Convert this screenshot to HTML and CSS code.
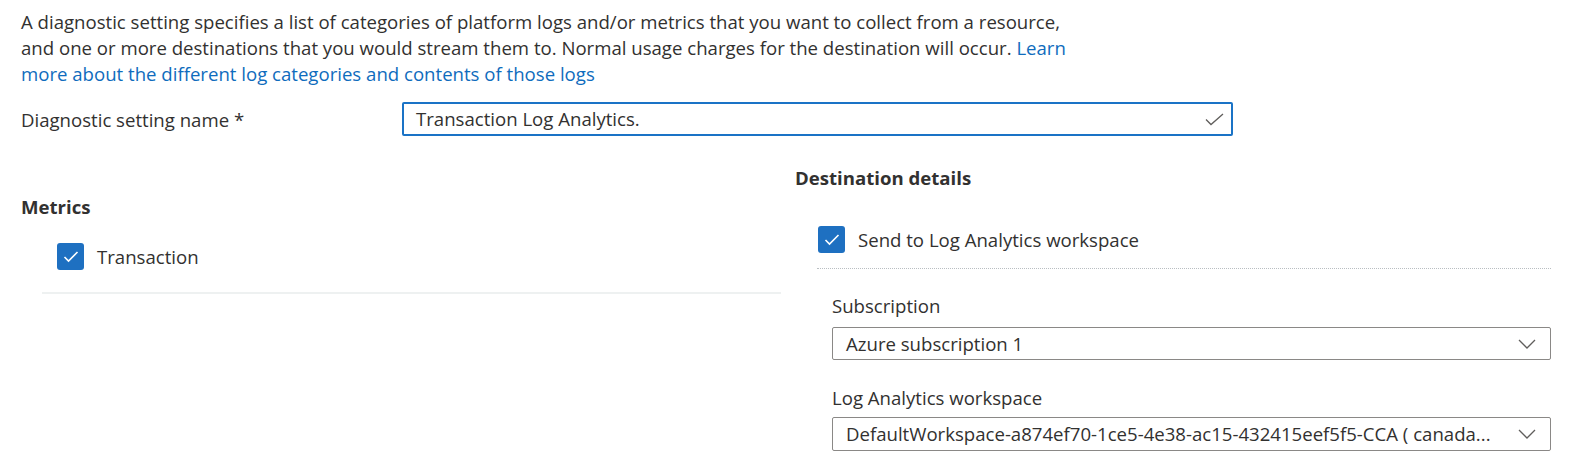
FILE: index.html
```html
<!DOCTYPE html>
<html lang="en">
<head>
<meta charset="utf-8">
<title>Diagnostic setting</title>
<link rel="stylesheet" href="styles.css">
</head>
<body>
<div class="page">
  <p class="intro">A diagnostic setting specifies a list of categories of platform logs and/or metrics that you want to collect from a resource,<br>and one or more destinations that you would stream them to. Normal usage charges for the destination will occur. <a class="link" href="#">Learn<br>more about the different log categories and contents of those logs</a></p>

  <div class="name-row">
    <label class="name-label">Diagnostic setting name *</label>
    <div class="name-input">
      <span class="name-value">Transaction Log Analytics.</span>
      <svg class="valid-icon" width="19" height="13" viewBox="0 0 19 13"><polyline points="1,6.5 6,11.5 18,1" fill="none" stroke="#605e5c" stroke-width="1.3"/></svg>
    </div>
  </div>

  <div class="columns">
    <section class="col-left">
      <h3 class="heading">Metrics</h3>
      <div class="metric-list">
        <div class="check-row">
          <span class="checkbox"><svg width="27" height="27" viewBox="0 0 27 27"><polyline points="7.5,14 11.5,18 20.5,9" fill="none" stroke="#fff" stroke-width="1.6"/></svg></span>
          <span class="check-text">Transaction</span>
        </div>
      </div>
    </section>

    <section class="col-right">
      <h3 class="heading">Destination details</h3>
      <div class="check-row dest-check">
        <span class="checkbox"><svg width="27" height="27" viewBox="0 0 27 27"><polyline points="7.5,14 11.5,18 20.5,9" fill="none" stroke="#fff" stroke-width="1.6"/></svg></span>
        <span class="check-text">Send to Log Analytics workspace</span>
      </div>
      <div class="dest-divider"></div>
      <div class="dest-fields">
        <label class="field-label">Subscription</label>
        <div class="select">
          <span class="select-value">Azure subscription 1</span>
          <svg class="chevron" width="18" height="10" viewBox="0 0 18 10"><polyline points="1,1 9,9 17,1" fill="none" stroke="#605e5c" stroke-width="1.3"/></svg>
        </div>
        <label class="field-label second">Log Analytics workspace</label>
        <div class="select tall">
          <span class="select-value">DefaultWorkspace-a874ef70-1ce5-4e38-ac15-432415eef5f5-CCA ( canada...</span>
          <svg class="chevron" width="18" height="10" viewBox="0 0 18 10"><polyline points="1,1 9,9 17,1" fill="none" stroke="#605e5c" stroke-width="1.3"/></svg>
        </div>
      </div>
    </section>
  </div>
</div>
</body>
</html>
```

FILE: styles.css
```css
html, body {
  margin: 0;
  padding: 0;
  background: #ffffff;
}

.page {
  font-family: "Open Sans", "Noto Sans", Arial, sans-serif;
  font-size: 18.6px;
  line-height: 26px;
  color: #323130;
  padding: 9px 0 0 21px;
  width: 1531px;
}

.intro {
  margin: 0;
  white-space: nowrap;
}

.link {
  color: #0f6cbd;
  text-decoration: none;
}

.name-row {
  display: flex;
  align-items: center;
  margin-top: 15px;
  height: 34px;
}

.name-label {
  width: 381px;
  flex: none;
  padding-top: 2px;
}

.name-input {
  box-sizing: border-box;
  width: 831px;
  height: 34px;
  border: 2px solid #1a73c6;
  border-radius: 2px;
  display: flex;
  align-items: center;
  justify-content: space-between;
  padding: 0 7px 0 12px;
}

.valid-icon {
  display: block;
}

.columns {
  display: flex;
  margin-top: 29px;
}

.col-left {
  width: 760px;
  flex: none;
  padding-top: 29px;
}

.col-right {
  width: 756px;
  flex: none;
  margin-left: 14px;
}

.heading {
  margin: 0;
  font-size: 18.6px;
  font-weight: 700;
  line-height: 26px;
}

.metric-list {
  margin-left: 21px;
  padding: 23px 0 22px 15px;
  border-bottom: 2px solid #eef1f1;
}

.check-row {
  display: flex;
  align-items: center;
}

.checkbox {
  width: 27px;
  height: 27px;
  flex: none;
  border-radius: 3px;
  background: #1e70c1;
  display: flex;
}

.check-text {
  margin-left: 13px;
}

.dest-check {
  margin: 35px 0 0 23px;
}

.dest-divider {
  margin: 15px 0 0 22px;
  border-top: 1px dotted #b9bec2;
}

.dest-fields {
  margin-left: 37px;
  padding-top: 24px;
}

.field-label {
  display: block;
}

.field-label.second {
  margin-top: 25px;
}

.select {
  box-sizing: border-box;
  margin-top: 8px;
  height: 33px;
  border: 1px solid #8a8886;
  border-radius: 2px;
  display: flex;
  align-items: center;
  padding: 0 14px 0 13px;
}

.select.tall {
  margin-top: 6px;
  height: 34px;
}

.select-value {
  flex: 1;
  min-width: 0;
  white-space: nowrap;
}

.chevron {
  display: block;
  flex: none;
  margin-left: 14px;
}
```
